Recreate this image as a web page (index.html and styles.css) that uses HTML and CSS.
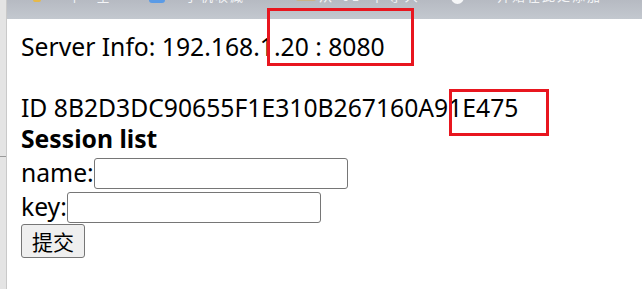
FILE: index.html
```html
<!DOCTYPE html>
<html lang="zh-CN">
<head>
<meta charset="utf-8">
<title>Session list</title>
<link rel="stylesheet" href="styles.css">
</head>
<body>
<div class="frame">
  <div class="side"><div class="side-mark"></div></div>
  <div class="main">
    <div class="topbar">
      <span class="bm bm-star"></span>
      <span class="bm-text t1">中 全</span>
      <span class="bm bm-blue"></span>
      <span class="bm-text t2">手机收藏</span>
      <span class="bm bm-folder"></span>
      <span class="bm-text t3">从 IE 中导入</span>
      <span class="bm bm-circle"></span>
      <span class="bm-text t4">开始在此处添加</span>
    </div>
    <div class="content">
      <div class="line info">Server Info: 192.168.1.20 : 8080</div>
      <div class="line">ID 8B2D3DC90655F1E310B267160A91E475</div>
      <div class="line title">Session list</div>
      <form class="form">
        <div class="row"><span class="label">name:</span><input class="field" type="text"></div>
        <div class="row"><span class="label">key:</span><input class="field" type="text"></div>
        <button class="submit" type="button">提交</button>
      </form>
    </div>
  </div>
</div>
<div class="mark mark-port"></div>
<div class="mark mark-id"></div>
</body>
</html>
```
FILE: styles.css
```css
html, body {
  margin: 0;
  padding: 0;
  background: #ffffff;
}
body {
  width: 642px;
  height: 289px;
  overflow: hidden;
  font-family: "Noto Sans", "Noto Sans CJK SC", sans-serif;
  color: #000;
}
.frame {
  display: flex;
  height: 289px;
}
.side {
  width: 6px;
  flex: 0 0 6px;
  background: #e4e4e4;
  border-right: 1px solid #c9c9c9;
  display: flex;
  flex-direction: column;
}
.side-mark {
  margin-top: 156px;
  height: 1px;
  background: #9a9a9a;
}
.main {
  flex: 1;
  display: flex;
  flex-direction: column;
}
.topbar {
  height: 19px;
  flex: 0 0 19px;
  background: linear-gradient(#b6bac2, #c3c8cf);
  display: flex;
  align-items: flex-start;
  overflow: hidden;
  font-size: 13px;
  color: #f4f5f7;
}
.bm {
  display: block;
  margin-top: -10px;
}
.bm-star {
  margin-left: 26px;
  width: 8px;
  height: 12px;
  background: #e6b94a;
  border-radius: 2px;
}
.bm-blue {
  margin-left: 14px;
  width: 16px;
  height: 13px;
  background: #5b9be6;
  border-radius: 3px;
}
.bm-folder {
  margin-left: 49px;
  width: 20px;
  height: 11px;
  background: #c9b38a;
  border-radius: 2px;
}
.bm-circle {
  margin-left: 32px;
  width: 13px;
  height: 14px;
  border-radius: 50%;
  background: #f6f7f8;
}
.bm-text {
  display: block;
  margin-top: -13px;
  line-height: 18px;
  white-space: nowrap;
}
.t1 { margin-left: 27px; width: 67px; letter-spacing: 6px; }
.t2 { margin-left: 20px; width: 62px; letter-spacing: 2px; }
.t3 { margin-left: 3px; width: 100px; letter-spacing: 4px; }
.t4 { margin-left: 33px; width: 130px; letter-spacing: 2px; }
.content {
  padding: 12px 0 0 14px;
  font-size: 24.7px;
}
.line {
  line-height: 31px;
  white-space: nowrap;
}
.info {
  margin-bottom: 30px;
}
.title {
  font-weight: bold;
}
.form {
  margin: 2px 0 0 0;
}
.row {
  display: flex;
  align-items: center;
  height: 34px;
}
.label {
  line-height: 28px;
}
.field {
  width: 254px;
  height: 31px;
  box-sizing: border-box;
  margin: 0;
  border: 1px solid #767676;
  border-radius: 3px;
  background: #fff;
  font-size: 20px;
  padding: 1px 3px;
}
.submit {
  display: block;
  width: 64px;
  height: 34px;
  box-sizing: border-box;
  margin: 0;
  padding: 0;
  border: 1px solid #767676;
  border-radius: 3px;
  background: #efefef;
  font-family: "Noto Sans CJK SC", sans-serif;
  font-size: 21px;
  color: #000;
}
.mark {
  position: absolute;
  box-sizing: border-box;
  border: 3px solid #e8161f;
}
.mark-port {
  left: 267px;
  top: 8px;
  width: 147px;
  height: 58px;
}
.mark-id {
  left: 449px;
  top: 89px;
  width: 100px;
  height: 47px;
}
```
